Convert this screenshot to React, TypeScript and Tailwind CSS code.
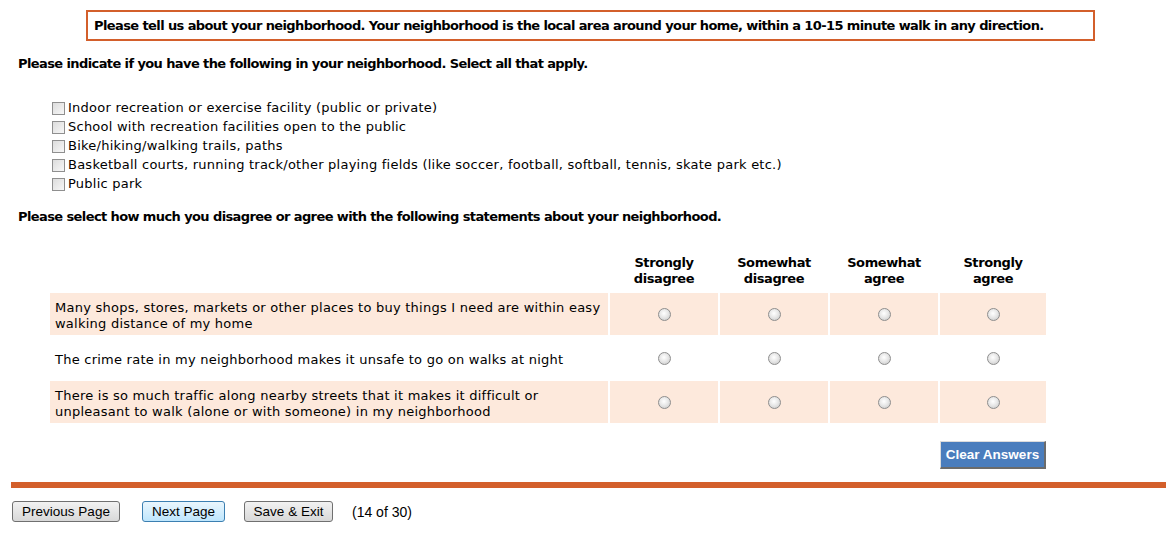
import React from "react";

const items = [
  "Indoor recreation or exercise facility (public or private)",
  "School with recreation facilities open to the public",
  "Bike/hiking/walking trails, paths",
  "Basketball courts, running track/other playing fields (like soccer, football, softball, tennis, skate park etc.)",
  "Public park",
];

const rows = [
  "Many shops, stores, markets or other places to buy things I need are within easy walking distance of my home",
  "The crime rate in my neighborhood makes it unsafe to go on walks at night",
  "There is so much traffic along nearby streets that it makes it difficult or unpleasant to walk (alone or with someone) in my neighborhood",
];

const heads = [
  ["Strongly", "disagree"],
  ["Somewhat", "disagree"],
  ["Somewhat", "agree"],
  ["Strongly", "agree"],
];

function Checkbox() {
  return (
    <span className="inline-block w-[13px] h-[13px] border border-[#8f8f8f] bg-gradient-to-br from-[#dcdcdc] to-[#f7f7f7] mr-[3px] shrink-0" />
  );
}

function Radio() {
  return (
    <span className="inline-block w-[13px] h-[13px] rounded-full border border-[#8e8e8e] bg-[radial-gradient(circle_at_45%_40%,#ffffff_0%,#e8e8e8_45%,#c4c4c4_100%)]" />
  );
}

export default function App() {
  return (
    <div className="w-[1166px] h-[536px] bg-white text-black text-[13px] leading-[16px] tracking-[0.24px] font-['DejaVu_Sans',Verdana,sans-serif] overflow-hidden">
      <div className="pt-[10px] pl-[86px]">
        <div className="w-[1009px] h-[31px] border-2 border-[#d35f2b] flex items-center pl-[6px] font-bold tracking-[-0.6px] whitespace-nowrap">
          Please tell us about your neighborhood. Your neighborhood is the local area around your home, within a 10-15 minute walk in any direction.
        </div>
      </div>
      <div className="pl-[18px] mt-[15px] font-bold tracking-[-0.6px]">
        Please indicate if you have the following in your neighborhood. Select all that apply.
      </div>
      <div className="pl-[52px] mt-[28px] flex flex-col gap-[3px]">
        {items.map((t) => (
          <label key={t} className="flex items-center h-[16px]">
            <Checkbox />
            <span>{t}</span>
          </label>
        ))}
      </div>
      <div className="pl-[18px] mt-[17px] font-bold tracking-[-0.6px]">
        Please select how much you disagree or agree with the following statements about your neighborhood.
      </div>
      <div className="pl-[48px] mt-[28px]">
        <table className="border-separate border-spacing-[2px]">
          <thead>
            <tr>
              <th className="w-[558px]"></th>
              {heads.map((h, i) => (
                <th key={i} className={`${i === 3 ? "w-[106px]" : "w-[108px]"} font-bold tracking-[-0.4px] text-center align-bottom pb-[4px] leading-[16px]`}>
                  {h[0]}
                  <br />
                  {h[1]}
                </th>
              ))}
            </tr>
          </thead>
          <tbody>
            {rows.map((r, i) => {
              const bg = i % 2 === 0 ? "bg-[#fde9dc]" : "bg-white";
              return (
                <tr key={i}>
                  <td className={`${bg} h-[42px] px-[5px] pt-[4px] align-middle`}>{r}</td>
                  {heads.map((_, j) => (
                    <td key={j} className={`${bg} text-center align-middle`}>
                      <div className="flex justify-center items-center pt-[1px]">
                        <Radio />
                      </div>
                    </td>
                  ))}
                </tr>
              );
            })}
          </tbody>
        </table>
      </div>
      <div className="flex justify-end pr-[120px] mt-[16px]">
        <button className="w-[106px] h-[28px] bg-[#4a7dbd] text-white font-bold text-[13.5px] tracking-normal font-['Liberation_Sans',Arial,sans-serif] border border-t-[#dcdcdc] border-l-[#dcdcdc] border-r-[#6b6b6b] border-b-[#6b6b6b] border-r-2 border-b-2">
          Clear Answers
        </button>
      </div>
      <div className="ml-[11px] mt-[13px] h-[6px] bg-[#d35f2b]" />
      <div className="flex items-center mt-[13px] pl-[12px] font-['Liberation_Sans',Arial,sans-serif] text-[13.5px] tracking-normal">
        <button className="w-[108px] h-[21px] rounded-[3px] border border-[#707070] bg-gradient-to-b from-[#f2f2f2] to-[#d8d8d8]">Previous Page</button>
        <button className="ml-[22px] w-[83px] h-[21px] rounded-[3px] border border-[#3c7fb1] bg-gradient-to-b from-[#eaf6fd] to-[#bee6fd]">Next Page</button>
        <button className="ml-[19px] w-[89px] h-[21px] rounded-[3px] border border-[#707070] bg-gradient-to-b from-[#f2f2f2] to-[#d8d8d8]">Save &amp; Exit</button>
        <span className="ml-[19px] text-[14px]">(14 of 30)</span>
      </div>
    </div>
  );
}
